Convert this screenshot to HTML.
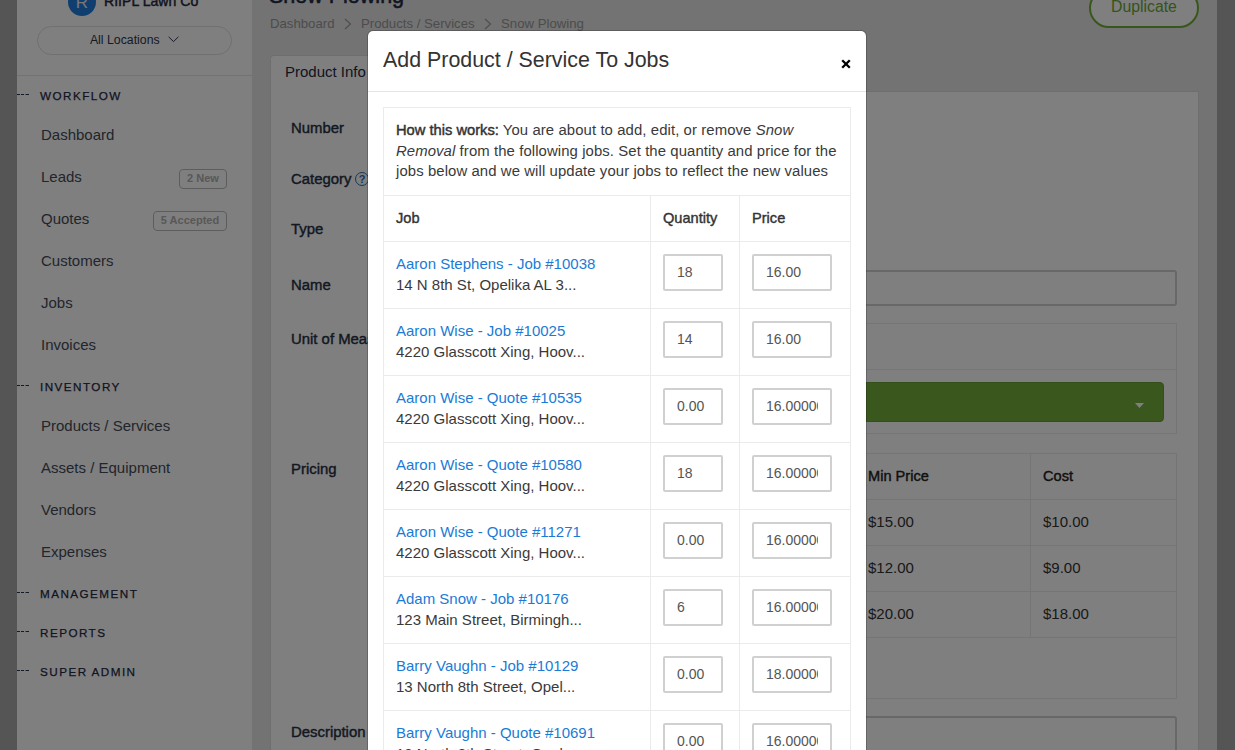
<!DOCTYPE html>
<html><head><meta charset="utf-8">
<style>
*{box-sizing:border-box;margin:0;padding:0}
html,body{width:1235px;height:750px;overflow:hidden;background:#e6e6e6;font-family:"Liberation Sans",sans-serif;color:#333}
.abs{position:absolute}
#lstrip{left:0;top:0;width:17px;height:750px;background:#aaa}
#rstrip{left:1217px;top:0;width:18px;height:750px;background:#aaa}
#side{left:17px;top:0;width:235px;height:750px;background:#fff}
.logo{left:68px;top:-12px;width:28px;height:28px;border-radius:50%;background:#207ddd;color:#eee;font-size:17px;line-height:30px;text-align:center}
.brand{left:104px;top:-7px;font-size:14.1px;-webkit-text-stroke:.45px #1f2a44;color:#1f2a44;white-space:nowrap}
.pill{left:37px;top:26px;width:195px;height:29px;border:1px solid #e0e0e0;border-radius:15px;font-size:12.3px;color:#2b3550;text-align:center;line-height:27px}
.sline{left:17px;top:75px;width:235px;height:1px;background:#e5e5e5}
.sec{left:40px;font-size:11.7px;letter-spacing:1.45px;-webkit-text-stroke:.25px #1f2a44;color:#1f2a44;white-space:nowrap}
.dash{left:17px;width:11px;height:0;border-top:1px dashed #777}
.item{left:41px;font-size:15px;color:#454b58;white-space:nowrap}
.badge{height:20px;border:1px solid #bbb;border-radius:4px;font-size:11px;color:#b0b0b0;line-height:17px;text-align:center;font-weight:bold}
#title{left:269px;top:-16px;font-size:21.5px;-webkit-text-stroke:.5px #1f2a44;color:#1f2a44;white-space:nowrap}
.crumb{top:16px;font-size:13.2px;color:#999;white-space:nowrap}
#dup{left:1089px;top:-12px;width:110px;height:40px;border:2px solid #6fae37;border-radius:20px;background:#fff;color:#6aa836;font-size:15.8px;line-height:20px;padding-left:20px;padding-top:7px}
#tab{left:270px;top:55px;width:110px;height:37px;background:#fff;border:1px solid #ddd;border-bottom:none;border-radius:4px 4px 0 0;font-size:15px;color:#1f2a44;padding:7px 0 0 14px}
#card{left:270px;top:91px;width:929px;height:700px;background:#fff;border:1px solid #ddd}
.lbl{left:291px;font-size:14.9px;font-weight:normal;-webkit-text-stroke:.4px #263044;color:#263044;white-space:nowrap}
#overlay{left:0;top:0;width:1235px;height:750px;background:rgba(0,0,0,.5)}
#modal{left:367px;top:30px;width:500px;height:760px;background:#fff;background-clip:padding-box;border:1px solid rgba(0,0,0,.2);border-radius:6px}

.mt{position:absolute;left:15px;top:17px;font-size:21.4px;color:#333;white-space:nowrap}
.mx{position:absolute;left:473px;top:28px}
.mhl{position:absolute;left:0;top:60px;width:498px;height:1px;background:#e5e5e5}
.tbl{position:absolute;left:15px;top:76px;width:468px;height:800px;border:1px solid #ebebeb}
.info{position:absolute;left:0;top:0;width:466px;height:88px;padding:12px 0 0 12px;font-size:14.9px;line-height:20.5px;white-space:nowrap;color:#3a3a3a;letter-spacing:.09px;border-bottom:1px solid #ebebeb}
.info b{font-weight:normal;color:#333;-webkit-text-stroke:.45px #333;font-size:14.7px;letter-spacing:0}
.thr{position:absolute;left:0;top:88px;width:466px;height:46px;border-bottom:1px solid #ebebeb}
.thr span{position:absolute;top:14px;font-size:14.6px;-webkit-text-stroke:.4px #333;color:#333}
.vl{position:absolute;top:88px;width:1px;height:800px;background:#ebebeb}
.row{position:absolute;left:15px;width:468px;height:67px;border-bottom:1px solid #ebebeb}
.jl{position:absolute;left:13px;top:13px;font-size:15px;color:#1a7bd6;white-space:nowrap}
.ja{position:absolute;left:13px;top:34px;font-size:15px;color:#3a3a3a;white-space:nowrap}
.row input{position:absolute;top:12px;height:37px;border:2px solid #d0d0d0;border-radius:2px;font-family:"Liberation Sans",sans-serif;font-size:14px;color:#555;padding:0 12px 2px 12px;background:#fff;outline:none}
.qi{left:280px;width:60px}
.pi{left:369px;width:80px}
.th{font-size:14.6px;-webkit-text-stroke:.4px #222;color:#222;white-space:nowrap}
.td{font-size:15px;color:#333;white-space:nowrap}
</style></head><body>
<div id="lstrip" class="abs"></div>
<div id="rstrip" class="abs"></div>
<div id="side" class="abs"></div>
<div class="abs logo">R</div>
<div class="abs brand">RIIPL Lawn Co</div>
<div class="abs pill">All Locations <svg width="11" height="7" viewBox="0 0 11 7" style="margin-left:5px;vertical-align:1px"><path d="M0.6 0.8 L5.5 5.6 L10.4 0.8" fill="none" stroke="#2b3550" stroke-width="1"/></svg></div>
<div class="abs sline"></div>
<svg class="abs" style="left:17px;top:94px" width="13" height="1" viewBox="0 0 13 1"><path d="M0 .5H3M4 .5H7M8.5 .5H12" stroke="#2a3450" stroke-width="1"/></svg><div class="abs sec" style="top:89px">WORKFLOW</div>
<div class="abs item" style="top:126px">Dashboard</div>
<div class="abs item" style="top:168px">Leads</div>
<div class="abs badge" style="left:179px;top:169px;width:48px">2 New</div>
<div class="abs item" style="top:210px">Quotes</div>
<div class="abs badge" style="left:153px;top:211px;width:74px">5 Accepted</div>
<div class="abs item" style="top:252px">Customers</div>
<div class="abs item" style="top:294px">Jobs</div>
<div class="abs item" style="top:336px">Invoices</div>
<svg class="abs" style="left:17px;top:385px" width="13" height="1" viewBox="0 0 13 1"><path d="M0 .5H3M4 .5H7M8.5 .5H12" stroke="#2a3450" stroke-width="1"/></svg><div class="abs sec" style="top:380px">INVENTORY</div>
<div class="abs item" style="top:417px">Products / Services</div>
<div class="abs item" style="top:459px">Assets / Equipment</div>
<div class="abs item" style="top:501px">Vendors</div>
<div class="abs item" style="top:543px">Expenses</div>
<svg class="abs" style="left:17px;top:592px" width="13" height="1" viewBox="0 0 13 1"><path d="M0 .5H3M4 .5H7M8.5 .5H12" stroke="#2a3450" stroke-width="1"/></svg><div class="abs sec" style="top:587px">MANAGEMENT</div>
<svg class="abs" style="left:17px;top:631px" width="13" height="1" viewBox="0 0 13 1"><path d="M0 .5H3M4 .5H7M8.5 .5H12" stroke="#2a3450" stroke-width="1"/></svg><div class="abs sec" style="top:626px">REPORTS</div>
<svg class="abs" style="left:17px;top:670px" width="13" height="1" viewBox="0 0 13 1"><path d="M0 .5H3M4 .5H7M8.5 .5H12" stroke="#2a3450" stroke-width="1"/></svg><div class="abs sec" style="top:665px">SUPER ADMIN</div>

<div id="title" class="abs">Snow Plowing</div>
<div class="abs crumb" style="left:270px">Dashboard</div>
<svg class="abs" style="left:344px;top:18px" width="8" height="12" viewBox="0 0 8 12"><path d="M1 1L6.5 6L1 11" fill="none" stroke="#999" stroke-width="1.1"/></svg>
<div class="abs crumb" style="left:361px">Products / Services</div>
<svg class="abs" style="left:484px;top:18px" width="8" height="12" viewBox="0 0 8 12"><path d="M1 1L6.5 6L1 11" fill="none" stroke="#999" stroke-width="1.1"/></svg>
<div class="abs crumb" style="left:501px">Snow Plowing</div>
<div id="dup" class="abs">Duplicate</div>
<div id="card" class="abs"></div>
<div id="tab" class="abs">Product Info</div>
<div class="abs lbl" style="top:120px">Number</div>
<div class="abs lbl" style="top:171px">Category</div><div class="abs" style="left:355px;top:172px;width:14px;height:14px;border:1.2px solid #2a6fb8;border-radius:50%;font-size:11px;font-weight:bold;line-height:12px;text-align:center;color:#2a6fb8">?</div>
<div class="abs lbl" style="top:221px">Type</div>
<div class="abs lbl" style="top:277px">Name</div>
<div class="abs lbl" style="top:331px">Unit of Measure</div>
<div class="abs lbl" style="top:461px">Pricing</div>
<div class="abs lbl" style="top:724px">Description</div>

<div class="abs" style="left:380px;top:270px;width:797px;height:36px;border:2px solid #d0d0d0;border-radius:3px;background:#fff"></div>
<div class="abs" style="left:380px;top:323px;width:797px;height:111px;border:1px solid #ebebeb"></div>
<div class="abs" style="left:380px;top:369px;width:797px;height:1px;background:#ebebeb"></div>
<div class="abs" style="left:390px;top:382px;width:774px;height:40px;border-radius:4px;background:#74ae3c;border:1px solid #6a9f36"></div>
<svg class="abs" style="left:1135px;top:403px" width="9" height="5" viewBox="0 0 9 5"><path d="M0 0H9L4.5 5Z" fill="#fff"/></svg>
<div class="abs" style="left:380px;top:453px;width:797px;height:246px;border:1px solid #ebebeb"></div>
<div class="abs" style="left:380px;top:499px;width:797px;height:1px;background:#ebebeb"></div>
<div class="abs" style="left:380px;top:545px;width:797px;height:1px;background:#ebebeb"></div>
<div class="abs" style="left:380px;top:591px;width:797px;height:1px;background:#ebebeb"></div>
<div class="abs" style="left:380px;top:637px;width:797px;height:1px;background:#ebebeb"></div>
<div class="abs" style="left:1030px;top:453px;width:1px;height:185px;background:#ebebeb"></div>
<div class="abs th" style="left:868px;top:468px">Min Price</div>
<div class="abs th" style="left:1043px;top:468px">Cost</div>
<div class="abs td" style="left:868px;top:513px">$15.00</div>
<div class="abs td" style="left:1043px;top:513px">$10.00</div>
<div class="abs td" style="left:868px;top:559px">$12.00</div>
<div class="abs td" style="left:1043px;top:559px">$9.00</div>
<div class="abs td" style="left:868px;top:605px">$20.00</div>
<div class="abs td" style="left:1043px;top:605px">$18.00</div>
<div class="abs" style="left:380px;top:716px;width:797px;height:80px;border:2px solid #d0d0d0;border-radius:3px;background:#fff"></div>
<div id="overlay" class="abs"></div>
<div id="modal" class="abs">
<div class="mt">Add Product / Service To Jobs</div>
<svg class="mx" width="10" height="10" viewBox="0 0 10 10"><path d="M1.2 1.2L8.8 8.8M8.8 1.2L1.2 8.8" stroke="#000" stroke-width="2.3"/></svg>
<div class="mhl"></div>
<div class="tbl">
<div class="info"><b>How this works:</b> You are about to add, edit, or remove <i>Snow</i><br><i>Removal</i> from the following jobs. Set the quantity and price for the<br>jobs below and we will update your jobs to reflect the new values</div>
<div class="thr"><span style="left:12px">Job</span><span style="left:279px">Quantity</span><span style="left:368px">Price</span></div>
<div class="vl" style="left:266px"></div><div class="vl" style="left:355px"></div>
</div>
<div class="row" style="top:211px"><div class="jl">Aaron Stephens - Job #10038</div><div class="ja">14 N 8th St, Opelika AL 3...</div><input class="qi" value="18"><input class="pi" value="16.00"></div>
<div class="row" style="top:278px"><div class="jl">Aaron Wise - Job #10025</div><div class="ja">4220 Glasscott Xing, Hoov...</div><input class="qi" value="14"><input class="pi" value="16.00"></div>
<div class="row" style="top:345px"><div class="jl">Aaron Wise - Quote #10535</div><div class="ja">4220 Glasscott Xing, Hoov...</div><input class="qi" value="0.00"><input class="pi" value="16.000000"></div>
<div class="row" style="top:412px"><div class="jl">Aaron Wise - Quote #10580</div><div class="ja">4220 Glasscott Xing, Hoov...</div><input class="qi" value="18"><input class="pi" value="16.000000"></div>
<div class="row" style="top:479px"><div class="jl">Aaron Wise - Quote #11271</div><div class="ja">4220 Glasscott Xing, Hoov...</div><input class="qi" value="0.00"><input class="pi" value="16.000000"></div>
<div class="row" style="top:546px"><div class="jl">Adam Snow - Job #10176</div><div class="ja">123 Main Street, Birmingh...</div><input class="qi" value="6"><input class="pi" value="16.000000"></div>
<div class="row" style="top:613px"><div class="jl">Barry Vaughn - Job #10129</div><div class="ja">13 North 8th Street, Opel...</div><input class="qi" value="0.00"><input class="pi" value="18.000000"></div>
<div class="row" style="top:680px"><div class="jl">Barry Vaughn - Quote #10691</div><div class="ja">13 North 8th Street, Opel...</div><input class="qi" value="0.00"><input class="pi" value="16.000000"></div>
</div>
</body></html>
